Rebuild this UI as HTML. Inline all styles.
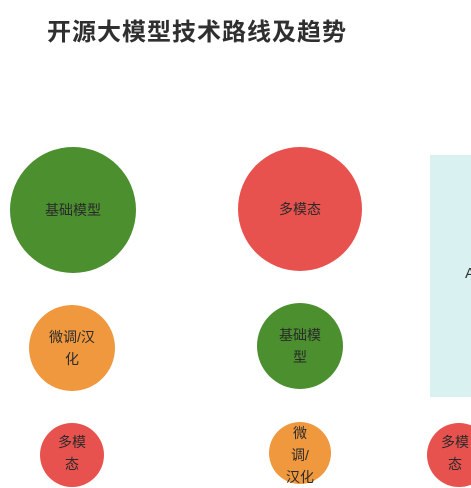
<!DOCTYPE html>
<html><head><meta charset="utf-8"><style>
body{margin:0;width:471px;height:471px;overflow:hidden;background:#fff;position:relative;font-family:"Liberation Sans","Noto Sans CJK SC",sans-serif}
.t{position:absolute;left:47px;top:12px;font-size:24px;font-weight:bold;color:#2f2f2f;letter-spacing:1px;white-space:nowrap}
.c{position:absolute;border-radius:50%;display:flex;align-items:center;justify-content:center;text-align:center;color:#2a2a2a;font-size:14px;line-height:22px}
.g{background:#4b8f2f}.r{background:#e8524e}.o{background:#f0983e}
.box{position:absolute;left:430px;top:155px;width:50px;height:242px;background:#daf1f1}
</style></head><body>
<div class="t">开源大模型技术路线及趋势</div>
<div class="c g" style="left:10px;top:147px;width:126px;height:126px">基础模型</div>
<div class="c r" style="left:238px;top:147px;width:124px;height:124px">多模态</div>
<div class="box"><span style="position:absolute;left:35px;top:110px;font-size:15px;color:#333">A</span></div>
<div class="c o" style="left:29px;top:305px;width:86px;height:86px">微调/汉<br>化</div>
<div class="c g" style="left:257px;top:303px;width:86px;height:86px">基础模<br>型</div>
<div class="c r" style="left:40px;top:423px;width:64px;height:64px;align-items:flex-start;padding-top:0"><span style="margin-top:8px">多模<br>态</span></div>
<div class="c o" style="left:269px;top:422px;width:62px;height:62px;align-items:flex-start"><span style="margin-top:0">微<br>调/<br>汉化</span></div>
<div class="c r" style="left:427px;top:423px;width:64px;height:64px;align-items:flex-start;justify-content:flex-start"><span style="margin-top:8px;margin-left:14px">多模<br>态</span></div>
</body></html>
